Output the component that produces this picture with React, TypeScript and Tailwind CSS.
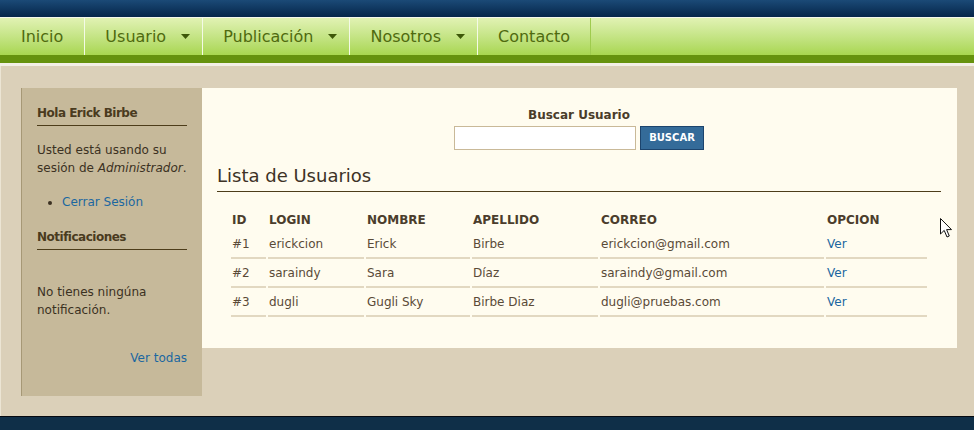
const menu = [
  { label: "Inicio", drop: false },
  { label: "Usuario", drop: true },
  { label: "Publicación", drop: true },
  { label: "Nosotros", drop: true },
  { label: "Contacto", drop: false },
];

const users = [
  { id: "#1", login: "erickcion", nombre: "Erick", apellido: "Birbe", correo: "erickcion@gmail.com" },
  { id: "#2", login: "saraindy", nombre: "Sara", apellido: "Díaz", correo: "saraindy@gmail.com" },
  { id: "#3", login: "dugli", nombre: "Gugli Sky", apellido: "Birbe Diaz", correo: "dugli@pruebas.com" },
];

const cols = [
  { label: "ID", w: "w-[35px]" },
  { label: "LOGIN", w: "w-[96px]" },
  { label: "NOMBRE", w: "w-[104px]" },
  { label: "APELLIDO", w: "w-[126px]" },
  { label: "CORREO", w: "w-[224px]" },
  { label: "OPCION", w: "w-[101px]" },
];

function Caret() {
  return (
    <svg width="9" height="5" viewBox="0 0 9 5" className="ml-[15px]">
      <path d="M0 0 H9 L4.5 5 Z" fill="#3e5809" />
    </svg>
  );
}

function Cursor() {
  return (
    <svg width="14" height="21" viewBox="0 0 14 21" className="absolute left-[940px] top-[218px]">
      <path d="M0.5 0.5 L0.5 16 L4.2 12.4 L7 19 L9.3 18 L6.6 11.6 L11.5 11.6 Z" fill="#fff" stroke="#111" strokeWidth="1" strokeLinejoin="round" />
    </svg>
  );
}

export default function App() {
  const cell = "pl-[1px] py-[4px] border-b-2 border-[#e2d8c1]";
  return (
    <div className="relative w-[974px] min-h-[430px] bg-[#dbd0b9] font-['DejaVu_Sans',sans-serif] overflow-hidden">
      {/* cabecera */}
      <div className="h-[17px] bg-gradient-to-b from-[#1b4a77] to-[#06264a]" />
      <div className="h-px bg-[#f4f8ec]" />
      <nav className="h-[37px] flex bg-gradient-to-b from-[#e1f2b3] to-[#a9d64f]">
        {menu.map((item, i) => (
          <div
            key={item.label}
            className={
              "flex items-center h-full text-[16px] text-[#4f6a0f] border-r " +
              (i === 0 ? "px-[21px] " : item.drop ? "pl-[20px] pr-[12px] " : "px-[20px] ") +
              (i === menu.length - 1 ? "border-[#9fcb4e]" : "border-[#f4fae6]")
            }
          >
            {item.label}
            {item.drop && <Caret />}
          </div>
        ))}
      </nav>
      <div className="h-[8px] bg-[#66920e]" />
      <div className="h-[3px] bg-[#f3efe6]" />

      <div className="flex items-start pl-[20px] pr-[17px] pt-[22px] pb-[20px] border-l border-[#ece5d4]">
        {/* Sidebar */}
        <aside className="w-[181px] shrink-0 h-[308px] bg-[#c6b99a] border-l border-[#a69876] px-[15px] pt-[16px] text-[12px] leading-[18px] text-[#3b3122]">
          <h3 className="font-bold tracking-[-0.5px] text-[#4a3b1e] pb-[3px] border-b border-[#4d3d1a]">
            Hola Erick Birbe
          </h3>
          <p className="mt-[15px]">
            Usted está usando su sesión de <em>Administrador</em>.
          </p>
          <ul className="mt-[16px] list-disc pl-[25px]">
            <li>
              <a className="text-[#1b67a0]">Cerrar Sesión</a>
            </li>
          </ul>
          <h3 className="mt-[17px] font-bold tracking-[-0.5px] text-[#4a3b1e] pb-[3px] border-b border-[#4d3d1a]">
            Notificaciones
          </h3>
          <p className="mt-[33px]">No tienes ningúna notificación.</p>
          <div className="mt-[30px] text-right">
            <a className="text-[#1b67a0]">Ver todas</a>
          </div>
        </aside>

        {/* Contenido */}
        <main className="flex-1 bg-[#fffcef] pl-[15px] pr-[16px] pt-[18px] pb-[30px] text-[12px] leading-[18px]">
          <div className="text-center font-bold text-[#4a3c2a]">Buscar Usuario</div>
          <div className="flex justify-center gap-[4px] mt-[2px]">
            <input className="w-[182px] h-[24px] bg-white border border-[#c9b998] outline-none" />
            <button className="w-[64px] h-[24px] bg-[#346b99] border border-[#1c446d] text-white font-bold text-[10px]">
              BUSCAR
            </button>
          </div>
          <h2 className="mt-[14px] text-[18px] leading-[24px] text-[#3d3326] pb-[3px] border-b border-[#4d3d1a]">
            Lista de Usuarios
          </h2>
          <table className="mx-[12px] mt-[14px] w-[700px] table-fixed border-separate [border-spacing:2px_1px] text-left">
            <thead>
              <tr>
                {cols.map((c) => (
                  <th key={c.label} className={c.w + " pl-[1px] pt-[4px] pb-[1px] font-bold text-[#4b3d2c]"}>
                    {c.label}
                  </th>
                ))}
              </tr>
            </thead>
            <tbody className="text-[#5a4a37]">
              {users.map((u) => (
                <tr key={u.id}>
                  <td className={cell}>{u.id}</td>
                  <td className={cell}>{u.login}</td>
                  <td className={cell}>{u.nombre}</td>
                  <td className={cell}>{u.apellido}</td>
                  <td className={cell}>{u.correo}</td>
                  <td className={cell}>
                    <a className="text-[#1b67a0]">Ver</a>
                  </td>
                </tr>
              ))}
            </tbody>
          </table>
        </main>
      </div>

      <footer className="h-[40px] bg-[#0f2f48] border-t border-[#050a10]" />
      <Cursor />
    </div>
  );
}
